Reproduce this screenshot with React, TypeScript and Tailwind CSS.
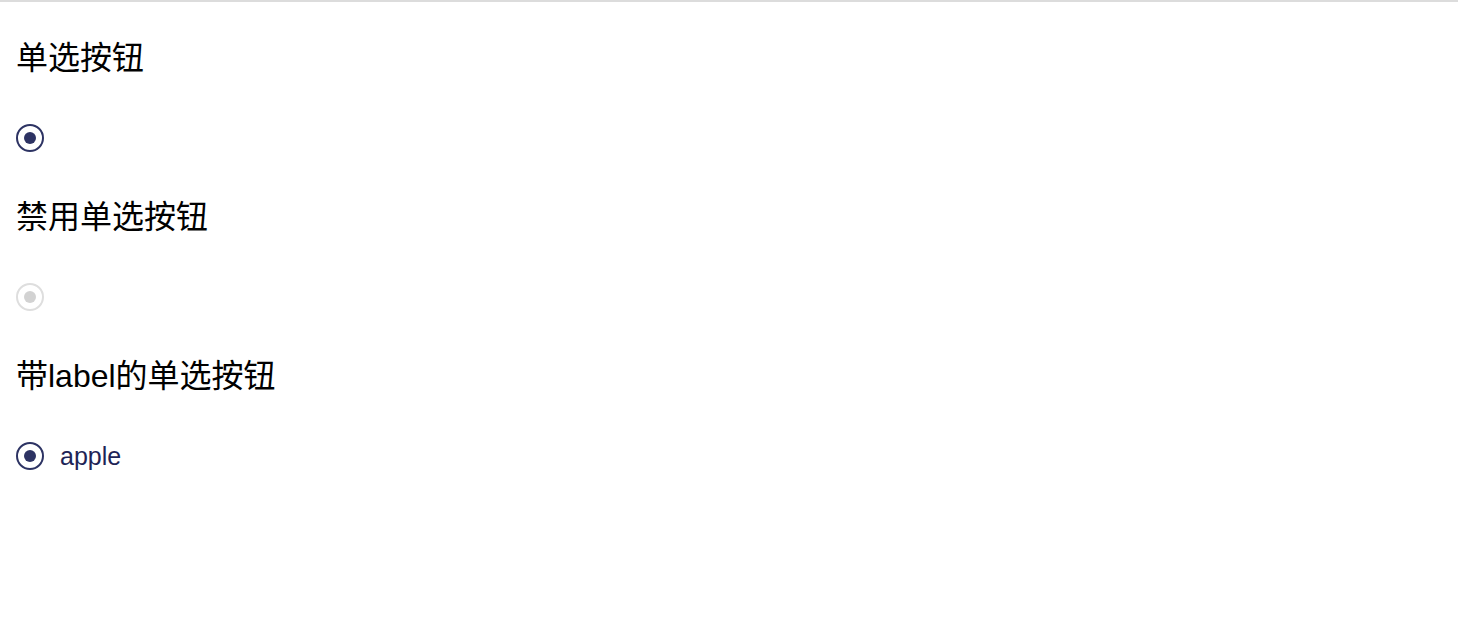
import { useState } from 'react'

type RadioProps = {
  checked: boolean
  disabled?: boolean
  label?: string
  onChange?: () => void
}

function Radio({ checked, disabled, label, onChange }: RadioProps) {
  return (
    <label
      className={`inline-flex items-center gap-4 ${disabled ? 'cursor-not-allowed' : 'cursor-pointer'}`}
      onClick={() => !disabled && onChange?.()}
    >
      <span
        className={`flex h-[28px] w-[28px] items-center justify-center rounded-full border-2 ${
          disabled ? 'border-[#dedede]' : 'border-[#2d3363]'
        }`}
      >
        {checked && (
          <span
            className={`h-[12px] w-[12px] rounded-full ${disabled ? 'bg-[#d2d2d2]' : 'bg-[#2d3363]'}`}
          />
        )}
      </span>
      {label && <span className="text-[25px] leading-none text-[#1e2356]">{label}</span>}
    </label>
  )
}

export default function App() {
  const [a, setA] = useState(true)
  const [b, setB] = useState(true)

  return (
    <div
      className="min-h-[630px] border-t-2 border-[#dcdcdc] bg-white px-4 pt-[36px] text-black"
      style={{ fontFamily: '"Liberation Sans", "Noto Sans CJK SC", sans-serif' }}
    >
      <h2 className="text-[32px] leading-[40px]">单选按钮</h2>
      <div className="mt-[46px] flex h-[28px] items-center">
        <Radio checked={a} onChange={() => setA(true)} />
      </div>

      <h2 className="mt-[45px] text-[32px] leading-[40px]">禁用单选按钮</h2>
      <div className="mt-[46px] flex h-[28px] items-center">
        <Radio checked disabled />
      </div>

      <h2 className="mt-[45px] text-[32px] leading-[40px]">带label的单选按钮</h2>
      <div className="mt-[46px] flex h-[28px] items-center">
        <Radio checked={b} label="apple" onChange={() => setB(true)} />
      </div>
    </div>
  )
}
